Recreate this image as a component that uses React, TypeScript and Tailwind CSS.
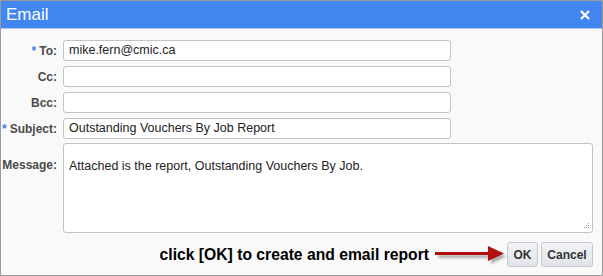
import React from "react";

const FONT = { fontFamily: '"Liberation Sans", Arial, sans-serif' };

function Label({ text, required }: { text: string; required?: boolean }) {
  return (
    <div className="flex h-[21px] items-center justify-end text-[12px] font-bold text-[#4b4b4b]">
      {required && <span className="mr-[3px] text-[#3d7fe0]">*</span>}
      {text}
    </div>
  );
}

function Field({ value }: { value?: string }) {
  return (
    <div className="flex h-[21px] w-[388px] items-center rounded-[3px] border border-[#c3c3c3] bg-white px-[5px] text-[12.5px] text-[#222]">
      {value}
    </div>
  );
}

function Arrow() {
  return (
    <svg width="72" height="22" viewBox="0 0 72 22">
      <defs>
        <filter id="sh" x="-20%" y="-50%" width="140%" height="200%">
          <feGaussianBlur stdDeviation="1.3" />
        </filter>
      </defs>
      <g transform="translate(2 3)" opacity="0.45" filter="url(#sh)">
        <rect x="1" y="8" width="56" height="3" fill="#555" />
        <polygon points="54,2 69,9.5 54,17" fill="#555" />
      </g>
      <rect x="0" y="8" width="56" height="3" fill="#b20f0f" />
      <polygon points="53,2 69,9.5 53,17" fill="#b20f0f" />
    </svg>
  );
}

export default function App() {
  return (
    <div className="h-[276px] w-[603px] bg-white" style={FONT}>
      <div className="flex h-full flex-col border border-[#9a9a9a] bg-[#f9f9f9]">
        <div className="flex h-[28px] items-center justify-between border-b border-[#a9c6f5] bg-[#4287f1] pl-[5px] pr-[12px]">
          <span className="text-[17px] text-white">Email</span>
          <svg width="10" height="10" viewBox="0 0 10 10">
            <path d="M1 1L9 9M9 1L1 9" stroke="#fff" strokeWidth="2.2" />
          </svg>
        </div>

        <div className="grid grid-cols-[56px_auto] gap-x-[6px] gap-y-[5px] pt-[11px] pr-[9px]">
          <Label text="To:" required />
          <Field value="mike.fern@cmic.ca" />
          <Label text="Cc:" />
          <Field />
          <Label text="Bcc:" />
          <Field />
          <Label text="Subject:" required />
          <Field value="Outstanding Vouchers By Job Report" />
          <div className="pt-[12px] text-right text-[12px] font-bold text-[#4b4b4b]">
            Message:
          </div>
          <div className="relative -mt-[1px] h-[90px] rounded-[3px] border border-[#c3c3c3] bg-white px-[5px] pt-[13px] text-[12.5px] text-[#222]">
            Attached is the report, Outstanding Vouchers By Job.
            <svg width="7" height="7" viewBox="0 0 7 7" className="absolute bottom-[2px] right-[2px]">
              <g fill="#9a9a9a">
                <rect x="5" y="0" width="1" height="1" />
                <rect x="3" y="2" width="1" height="1" />
                <rect x="5" y="2" width="1" height="1" />
                <rect x="1" y="4" width="1" height="1" />
                <rect x="3" y="4" width="1" height="1" />
                <rect x="5" y="4" width="1" height="1" />
              </g>
            </svg>
          </div>
        </div>

        <div className="mt-[9px] flex items-center justify-end pr-[9px]">
          <span className="mr-[6px] text-[15.7px] font-bold text-black">
            click [OK] to create and email report
          </span>
          <Arrow />
          <button className="h-[25px] w-[31px] rounded-[3px] border border-[#c5c9cf] bg-gradient-to-b from-[#f1f3f5] to-[#e1e4e8] text-[12px] font-bold text-[#333]">
            OK
          </button>
          <button className="ml-[3px] h-[25px] w-[52px] rounded-[3px] border border-[#c5c9cf] bg-gradient-to-b from-[#f1f3f5] to-[#e1e4e8] text-[12px] font-bold text-[#333]">
            Cancel
          </button>
        </div>
      </div>
    </div>
  );
}
